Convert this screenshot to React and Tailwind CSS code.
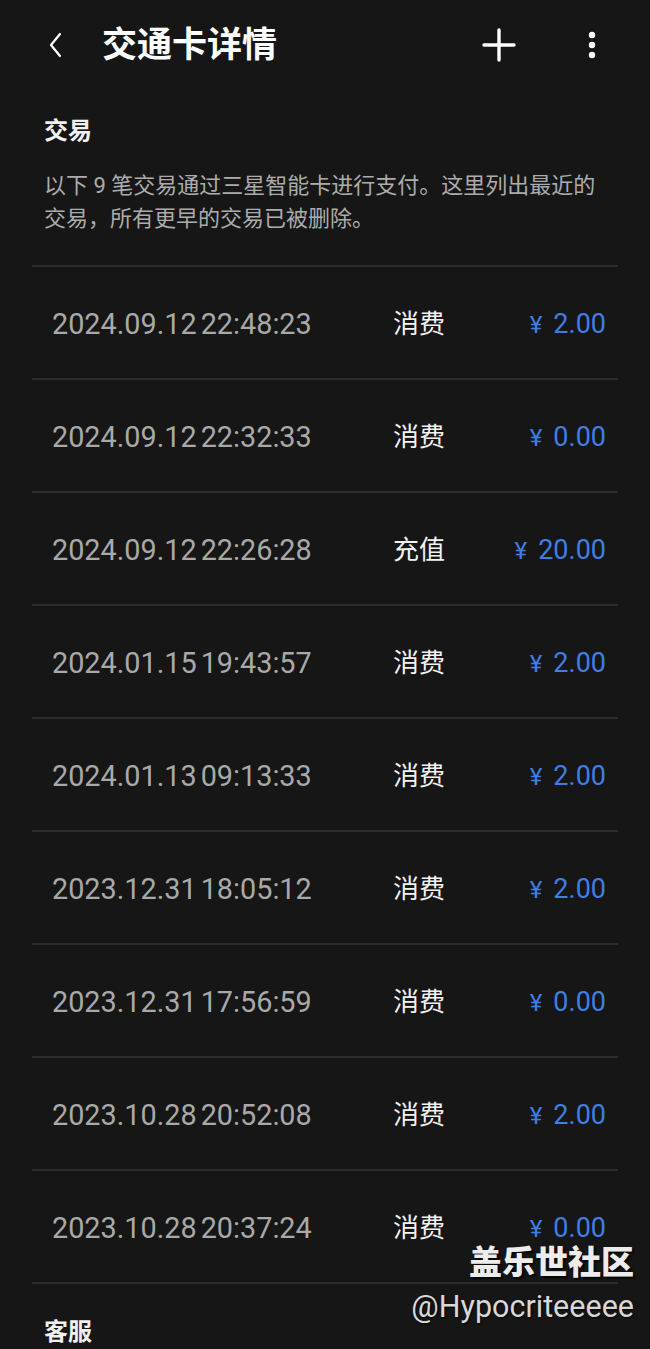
import React from 'react';

const ROWS = [
  { date: '2024.09.12', time: '22:48:23', type: '消费', amount: '2.00' },
  { date: '2024.09.12', time: '22:32:33', type: '消费', amount: '0.00' },
  { date: '2024.09.12', time: '22:26:28', type: '充值', amount: '20.00' },
  { date: '2024.01.15', time: '19:43:57', type: '消费', amount: '2.00' },
  { date: '2024.01.13', time: '09:13:33', type: '消费', amount: '2.00' },
  { date: '2023.12.31', time: '18:05:12', type: '消费', amount: '2.00' },
  { date: '2023.12.31', time: '17:56:59', type: '消费', amount: '0.00' },
  { date: '2023.10.28', time: '20:52:08', type: '消费', amount: '2.00' },
  { date: '2023.10.28', time: '20:37:24', type: '消费', amount: '0.00' },
];

const font = { fontFamily: 'Roboto, "Noto Sans CJK SC", sans-serif' };

export default function App() {
  return (
    <div className="relative w-[650px] h-[1349px] overflow-hidden bg-[#161616] text-white" style={font}>
      {/* Header */}
      <div className="flex items-center h-[90px] pl-[44px] pr-[54px]">
        <svg width="24" height="30" viewBox="0 0 24 30">
          <path d="M16 4 L7 15 L16 26" fill="none" stroke="#fff" strokeWidth="2.2" strokeLinecap="round" strokeLinejoin="round" />
        </svg>
        <h1 className="ml-[34px] text-[35px] font-bold leading-none">交通卡详情</h1>
        <div className="ml-auto flex items-center gap-[72px]">
          <svg width="34" height="34" viewBox="0 0 34 34">
            <path d="M17 2 V32 M2 17 H32" stroke="#fff" strokeWidth="3.4" strokeLinecap="round" />
          </svg>
          <svg width="8" height="30" viewBox="0 0 8 30">
            <circle cx="4" cy="5" r="3.2" fill="#fff" />
            <circle cx="4" cy="15" r="3.2" fill="#fff" />
            <circle cx="4" cy="25" r="3.2" fill="#fff" />
          </svg>
        </div>
      </div>

      {/* Section */}
      <div className="px-[44px] pt-[29px]">
        <h2 className="text-[24px] font-bold leading-none text-[#f0f0f0]">交易</h2>
        <p className="mt-[26px] text-[22px] leading-[33px] text-[#acacac]">
          以下 9 笔交易通过三星智能卡进行支付。这里列出最近的交易，所有更早的交易已被删除。
        </p>
      </div>

      <div className="mx-[32px] mt-[30px] border-t-2 border-[#2c2c2c]">
        {ROWS.map((r, i) => (
          <div key={i} className="flex items-center h-[113px] pt-[4px] border-b-2 border-[#2c2c2c] pl-[20px] pr-[12px]">
            <span className="text-[28.8px] text-[#a9a9a9] w-[341px]">
              {r.date}<span className="ml-[4px]">{r.time}</span>
            </span>
            <span className="text-[26px] text-[#f2f2f2]">{r.type}</span>
            <span className="ml-auto text-[27px] text-[#3f7ee3]">
              <span className="text-[24px] mr-[11px]">¥</span>{r.amount}
            </span>
          </div>
        ))}
      </div>

      <div className="px-[44px] pt-[36px]">
        <h2 className="text-[24px] font-bold leading-none text-[#f0f0f0]">客服</h2>
      </div>

      {/* Watermark */}
      <div className="absolute right-[16px] top-[1246px] flex flex-col items-end">
        <span className="text-[33px] font-black leading-none text-[#ececec] [text-shadow:2px_2px_2px_rgba(0,0,0,0.8)]">盖乐世社区</span>
        <span className="mt-[13px] text-[30.5px] leading-none text-[#d8d8d8] [text-shadow:1px_1px_2px_rgba(0,0,0,0.8)]">@Hypocriteeeee</span>
      </div>
    </div>
  );
}
